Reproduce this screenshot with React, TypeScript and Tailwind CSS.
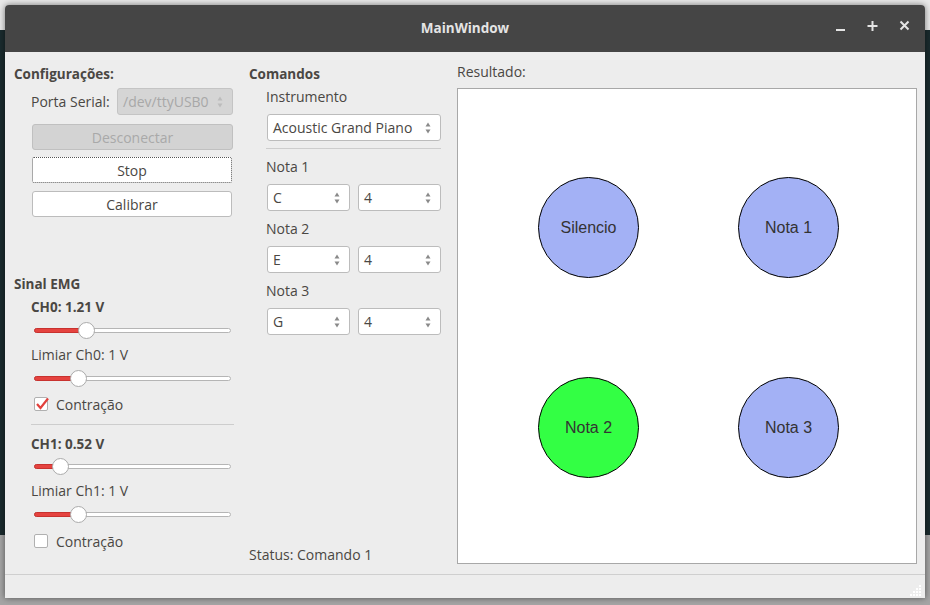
import React from "react";

const FONT = { fontFamily: '"Open Sans", "Noto Sans", sans-serif' };

function Arrows({ dim = false }: { dim?: boolean }) {
  const c = dim ? "#bcbcbc" : "#8a8a8a";
  return (
    <svg width="8" height="14" viewBox="0 0 8 14" className="shrink-0">
      <path d="M4 1.5 L6.5 5.5 L1.5 5.5 Z" fill={c} />
      <path d="M4 12.5 L6.5 8.5 L1.5 8.5 Z" fill={c} />
    </svg>
  );
}

function Field({
  value,
  className = "",
  dim = false,
}: {
  value: string;
  className?: string;
  dim?: boolean;
}) {
  return (
    <div
      className={`flex h-[27px] items-center justify-between rounded-[3px] border pl-[5px] pr-[8px] text-[14px] ${
        dim
          ? "border-[#c4c4c4] bg-[#d5d5d5] text-[#a8a8a8]"
          : "border-[#bcbcbc] bg-white text-[#4a4743]"
      } ${className}`}
    >
      <span>{value}</span>
      <Arrows dim={dim} />
    </div>
  );
}

function Slider({ pos }: { pos: number }) {
  // pos: handle centre, px from the left of the track
  return (
    <div className="relative ml-[20px] h-[16px] w-[197px]">
      <div className="absolute left-0 right-0 top-[6px] h-[5px] rounded-full border border-[#b5b5b5] bg-white" />
      <div
        className="absolute left-0 top-[6px] h-[5px] rounded-full border border-[#c8322f] bg-[#e5433f]"
        style={{ width: pos }}
      />
      <div
        className="absolute top-0 h-[17px] w-[17px] rounded-full border border-[#ababab] bg-white"
        style={{ left: pos - 8.5 }}
      />
    </div>
  );
}

function Check({ on, className = "" }: { on: boolean; className?: string }) {
  return (
    <div className={`ml-[20px] flex h-[18px] items-center gap-[8px] ${className}`}>
      <div className="relative h-[14px] w-[14px] rounded-[2px] border border-[#b0b0b0] bg-white">
        {on && (
          <svg width="16" height="14" viewBox="0 0 16 14" className="absolute -top-[1px] left-0">
            <path d="M2 7 L5.5 11 L13 1.5" fill="none" stroke="#e2403c" strokeWidth="2.2" />
          </svg>
        )}
      </div>
      <span className="text-[14px] text-[#4a4743]">Contração</span>
    </div>
  );
}

function Circle({ label, green = false }: { label: string; green?: boolean }) {
  return (
    <div
      className={`flex h-[101px] w-[101px] items-center justify-center rounded-full border border-black text-[16px] text-[#333] ${
        green ? "bg-[#33ff44]" : "bg-[#a3b1f5]"
      }`}
      style={{ fontFamily: '"Liberation Sans", Arial, sans-serif' }}
    >
      {label}
    </div>
  );
}

function Grip() {
  const dots = [
    [9, 1],
    [6, 4],
    [9, 4],
    [3, 7],
    [6, 7],
    [9, 7],
    [0, 10],
    [3, 10],
    [6, 10],
    [9, 10],
  ];
  return (
    <svg width="12" height="12" viewBox="0 0 12 12">
      {dots.map(([x, y], i) => (
        <rect key={i} x={x} y={y} width="2" height="2" fill="#fff" />
      ))}
    </svg>
  );
}

export default function App() {
  return (
    <div className="relative h-[605px] w-[930px] overflow-hidden bg-[#1a2b2e]" style={FONT}>
      <div className="absolute left-0 top-0 h-[30px] w-full bg-[#e9e9e9]" />
      <div className="absolute bottom-0 left-0 h-[70px] w-full bg-[#a5a5a5]" />
      <div className="relative ml-[5px] mt-[5px] flex h-[593px] w-[920px] flex-col overflow-hidden rounded-t-[4px] bg-[#ededed] shadow-[0_0_6px_rgba(0,0,0,0.5)]">
        {/* title bar */}
        <div className="relative flex h-[47px] shrink-0 items-center justify-center bg-[#454545]">
          <span className="text-[13.5px] font-bold text-[#e4e4e4]">MainWindow</span>
          <div className="absolute right-[13px] top-[14px] flex items-center gap-[18px] text-[#e4e4e4]">
            <svg width="14" height="14" viewBox="0 0 14 14">
              <rect x="2" y="10" width="9" height="2" fill="currentColor" />
            </svg>
            <svg width="14" height="14" viewBox="0 0 14 14">
              <rect x="1.5" y="6" width="10" height="2" fill="currentColor" />
              <rect x="5.5" y="2" width="2" height="10" fill="currentColor" />
            </svg>
            <svg width="14" height="14" viewBox="0 0 14 14">
              <path d="M2.5 2.5 L10.5 10.5 M10.5 2.5 L2.5 10.5" stroke="currentColor" strokeWidth="2" />
            </svg>
          </div>
        </div>

        {/* content */}
        <div className="flex h-[522px] shrink-0 text-[14px] text-[#4a4743]">
          {/* left column */}
          <div className="ml-[9px] flex w-[221px] flex-col pt-[13px]">
            <div className="h-[18px] text-[13.5px] font-bold leading-[18px]">Configurações:</div>
            <div className="mt-[5px] flex h-[27px] items-center">
              <span className="ml-[17px] w-[86px]">Porta Serial:</span>
              <Field value="/dev/ttyUSB0" dim className="w-[116px]" />
            </div>
            <div className="ml-[18px] mt-[9px] flex h-[26px] w-[201px] items-center justify-center rounded-[3px] border border-[#c0c0c0] bg-[#d3d3d3] text-[#a9a9a9]">
              Desconectar
            </div>
            <div className="ml-[18px] mt-[7px] flex h-[26px] w-[200px] items-center justify-center rounded-[2px] border border-dotted border-[#555] bg-white">
              Stop
            </div>
            <div className="ml-[18px] mt-[8px] flex h-[26px] w-[200px] items-center justify-center rounded-[3px] border border-[#bcbcbc] bg-white">
              Calibrar
            </div>

            <div className="mt-[58px] h-[18px] text-[13.5px] font-bold leading-[18px]">Sinal EMG</div>
            <div className="ml-[17px] mt-[5px] h-[18px] text-[13.5px] font-bold leading-[18px]">CH0: 1.21 V</div>
            <div className="mt-[6px]">
              <Slider pos={52} />
            </div>
            <div className="ml-[17px] mt-[8px] h-[18px] leading-[18px]">Limiar Ch0: 1 V</div>
            <div className="mt-[6px]">
              <Slider pos={44} />
            </div>
            <Check on className="mt-[9px]" />
            <div className="ml-[17px] mt-[11px] h-px w-[203px] bg-[#cdcdcd]" />
            <div className="ml-[17px] mt-[10px] h-[18px] text-[13.5px] font-bold leading-[18px]">CH1: 0.52 V</div>
            <div className="mt-[5px]">
              <Slider pos={26} />
            </div>
            <div className="ml-[17px] mt-[8px] h-[18px] leading-[18px]">Limiar Ch1: 1 V</div>
            <div className="mt-[6px]">
              <Slider pos={44} />
            </div>
            <Check on={false} className="mt-[10px]" />
          </div>

          {/* middle column */}
          <div className="ml-[14px] flex w-[192px] flex-col pt-[13px]">
            <div className="h-[18px] text-[13.5px] font-bold leading-[18px]">Comandos</div>
            <div className="ml-[17px] mt-[5px] h-[18px] leading-[18px]">Instrumento</div>
            <Field value="Acoustic Grand Piano" className="ml-[18px] mt-[8px] w-[174px]" />
            <div className="ml-[17px] mt-[7px] h-px w-[175px] bg-[#cdcdcd]" />
            <div className="ml-[17px] mt-[9px] h-[18px] leading-[18px]">Nota 1</div>
            <div className="ml-[18px] mt-[8px] flex gap-[8px]">
              <Field value="C" className="w-[83px]" />
              <Field value="4" className="w-[83px]" />
            </div>
            <div className="ml-[17px] mt-[9px] h-[18px] leading-[18px]">Nota 2</div>
            <div className="ml-[18px] mt-[8px] flex gap-[8px]">
              <Field value="E" className="w-[83px]" />
              <Field value="4" className="w-[83px]" />
            </div>
            <div className="ml-[17px] mt-[9px] h-[18px] leading-[18px]">Nota 3</div>
            <div className="ml-[18px] mt-[8px] flex gap-[8px]">
              <Field value="G" className="w-[83px]" />
              <Field value="4" className="w-[83px]" />
            </div>
            <div className="mt-[211px] h-[18px] leading-[18px]">Status: Comando 1</div>
          </div>

          {/* right column */}
          <div className="ml-[16px] flex flex-col pt-[11px]">
            <div className="h-[18px] leading-[18px]">Resultado:</div>
            <div className="mt-[7px] flex h-[476px] w-[460px] flex-col gap-[99px] border border-[#a8a8a8] bg-white pl-[80px] pt-[88px]">
              <div className="flex gap-[99px]">
                <Circle label="Silencio" />
                <Circle label="Nota 1" />
              </div>
              <div className="flex gap-[99px]">
                <Circle label="Nota 2" green />
                <Circle label="Nota 3" />
              </div>
            </div>
          </div>
        </div>

        {/* status bar */}
        <div className="flex flex-1 items-end justify-end border-t border-[#cfcfcf] pb-[2px] pr-[3px]">
          <Grip />
        </div>
      </div>
    </div>
  );
}
